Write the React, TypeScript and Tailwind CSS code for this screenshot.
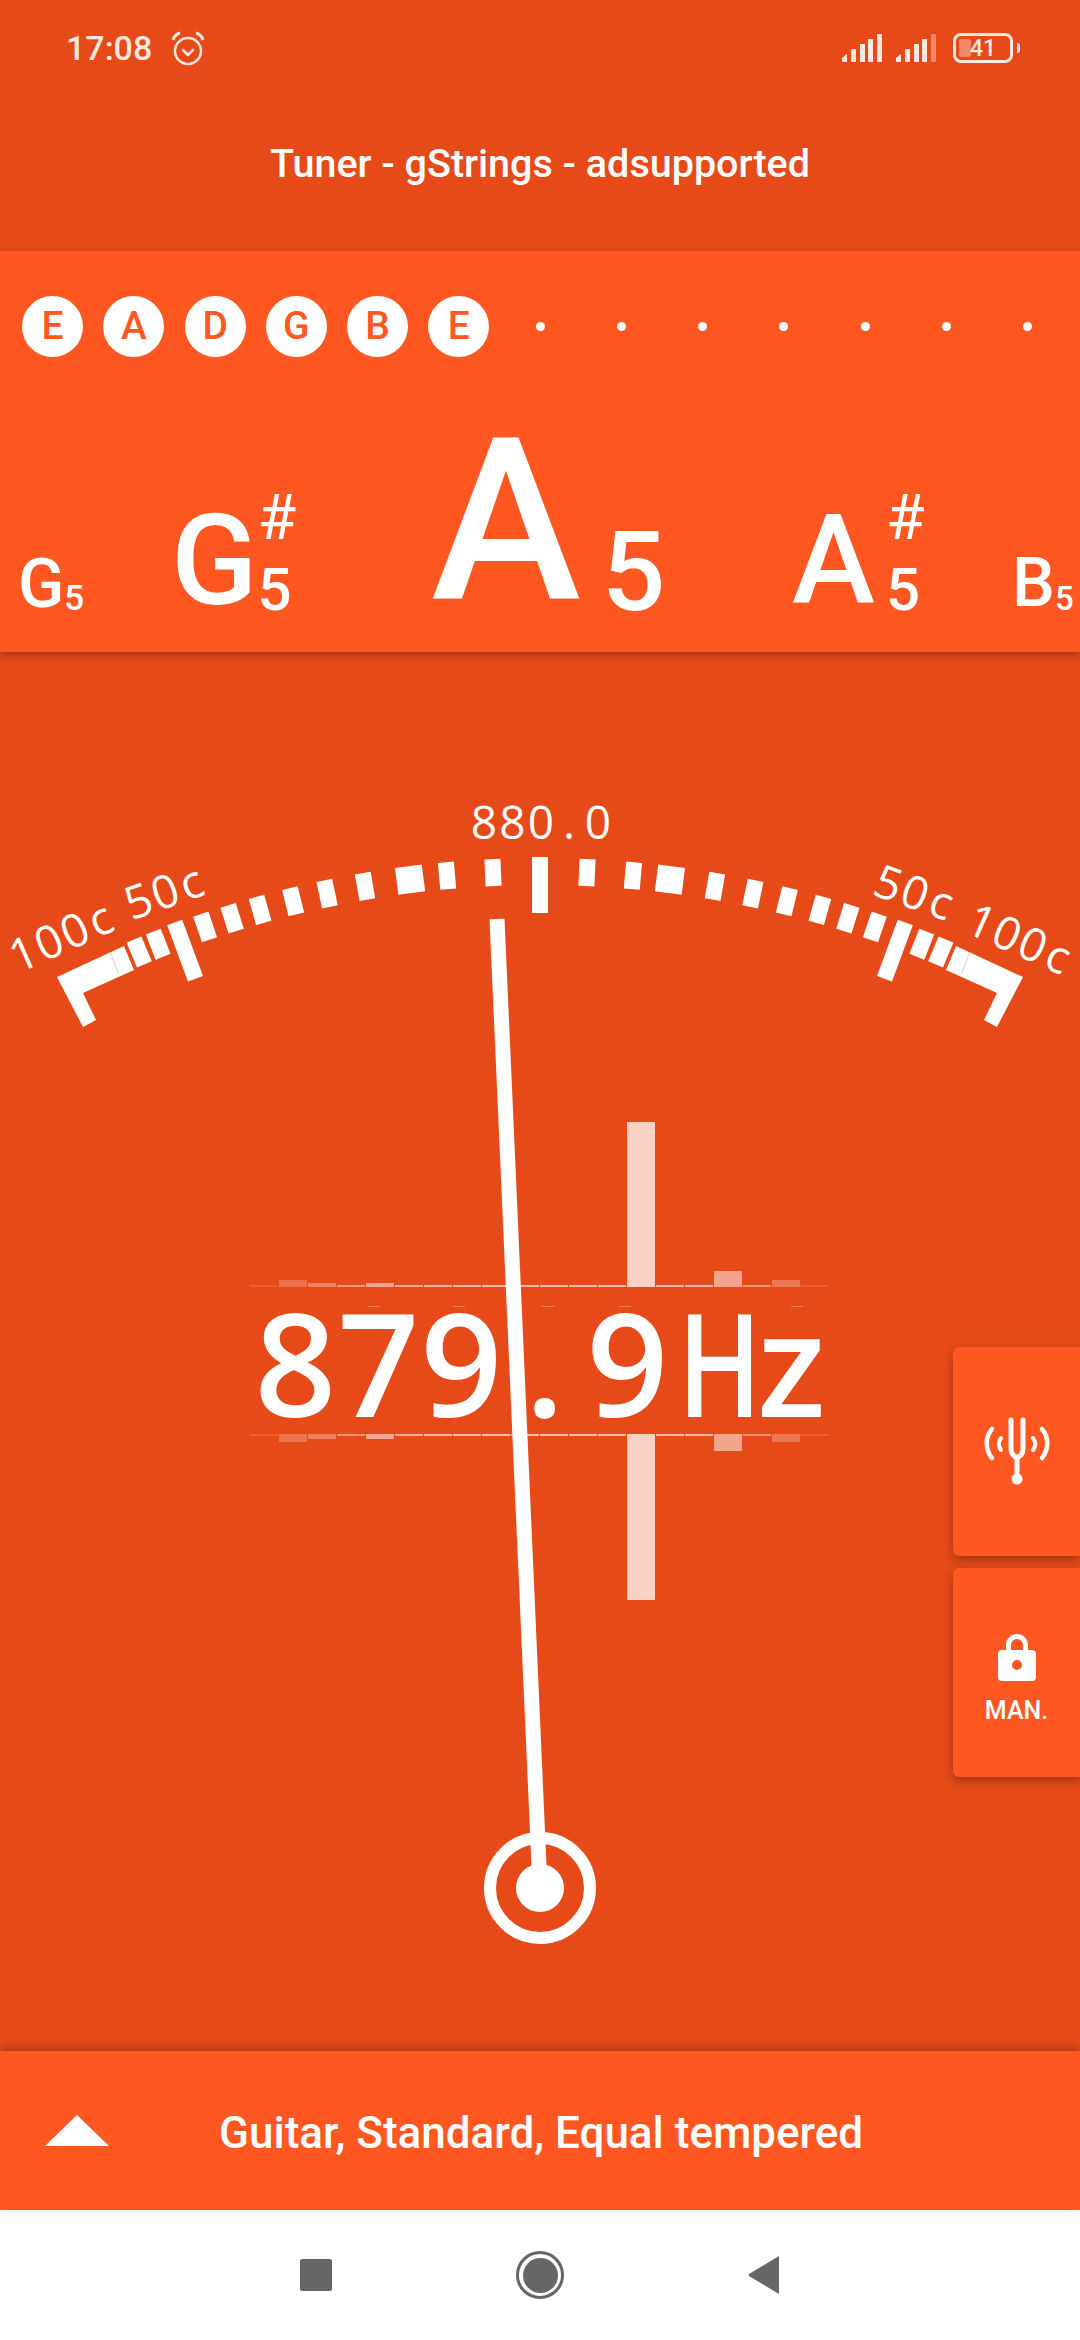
import React from 'react';

const roboto = "font-['Roboto',sans-serif]";
const mono = "font-['Open_Sans',sans-serif]";

const STRINGS = ['E', 'A', 'D', 'G', 'B', 'E', '', '', '', '', '', '', ''];

// gauge pivot, every tick hangs off this circle
const CX = 540;
const CY = 1910;

// horizontal offset from centre, tick width
const TICKS: [number, number][] = [
  [47, 16], [93, 16], [130, 27], [175, 16], [213, 16], [247, 16],
  [280, 16], [308, 16], [335, 16], [382, 16], [401, 16],
];

// spectrum cells: height above the line, opacity
const SPECTRUM: [number, number][] = [
  [2, 0.12], [7, 0.22], [4, 0.3], [2, 0.42], [4, 0.5], [2, 0.55], [2, 0.6], [2, 0.62], [2, 0.65], [2, 0.65],
  [2, 0.65], [2, 0.65], [2, 0.65], [165, 0.75], [2, 0.62], [2, 0.6], [16, 0.5], [2, 0.4], [7, 0.25], [2, 0.12],
];

const deg = (dx: number) => (Math.asin(dx / 1039) * 180) / Math.PI;

const Bracket = ({ flip }: { flip?: boolean }) => (
  <g transform={flip ? 'translate(1080 0) scale(-1 1)' : undefined}>
    <polygon fill="#fff" points="57,977 124,946 134,970 83,993 96,1020 83,1027" />
    <line x1={110} y1={952} x2={119} y2={975} stroke="#f3b9a4" strokeWidth={0.8} />
  </g>
);

const Dial = () => (
  <svg className="absolute left-0 top-0" width={1080} height={1399} viewBox="0 652 1080 1399">
    {/* spectrum, same bars mirrored around the frequency readout */}
    {SPECTRUM.map(([h, o], i) => (
      <g key={i} fill="#fff" opacity={o}>
        <rect x={250 + i * 29} y={1287 - h} width={28} height={h} />
        <rect x={250 + i * 29} y={1434} width={28} height={h < 3 ? 2 : h + 1} />
      </g>
    ))}
    {[368, 453, 542, 619, 791].map((x) => (
      <rect key={x} x={x} y={1306} width={12} height={1} fill="#fff" opacity={0.3} />
    ))}

    {/* scale */}
    <rect x={532} y={857} width={16} height={56} fill="#fff" />
    {TICKS.flatMap(([dx, w]) =>
      [-1, 1].map((side) => (
        <rect
          key={`${dx}${side}`}
          x={CX - w / 2}
          y={CY - 1052}
          width={w}
          height={27}
          fill="#fff"
          transform={`rotate(${side * deg(dx)} ${CX} ${CY})`}
        />
      )),
    )}
    {[-1, 1].map((side) => (
      <rect
        key={side}
        x={CX - 8}
        y={CY - 1053}
        width={16}
        height={60}
        fill="#fff"
        transform={`rotate(${side * 20.3} ${CX} ${CY})`}
      />
    ))}
    <Bracket />
    <Bracket flip />

    <g fill="#fff" fontFamily="'Open Sans', sans-serif" fontWeight={500} fontSize={46} textAnchor="middle">
      <text x="484 512.5 541 569 598" y={839}>880.0</text>
      <text x="-41 -13 15 43" y={16} transform="translate(61 937) rotate(-24)">100c</text>
      <text x="-28 0 28" y={16} transform="translate(165 892) rotate(-19.5)">50c</text>
      <text x="-28 0 28" y={16} transform="translate(915 893) rotate(19.5)">50c</text>
      <text x="-41 -13 15 43" y={16} transform="translate(1019 939) rotate(24)">100c</text>
    </g>

    {/* needle */}
    <line x1={497} y1={919} x2={540} y2={1888} stroke="#fff" strokeWidth={15} />
    <circle cx={540} cy={1888} r={50} fill="none" stroke="#fff" strokeWidth={12} />
    <circle cx={540} cy={1888} r={24} fill="#fff" />
  </svg>
);

const Note = ({ letter, size, sub, raise, sharp, width }: {
  letter: string; size: string; sub: string; raise: string; sharp?: boolean; width: string;
}) => (
  <div className={`${width} shrink-0 whitespace-nowrap leading-none`}>
    <span className={`${size} ${raise} font-medium`}>{letter}</span>
    <span className={`${sub} relative inline-block font-medium leading-none`}>
      5
      {sharp && <span className="absolute left-0 bottom-[71px] text-[63px] font-normal leading-none">#</span>}
    </span>
  </div>
);

const Tuner = () => (
  <svg width={66} height={68} viewBox="0 0 66 68" fill="none" stroke="#fff" strokeLinecap="round">
    <path d="M27 3v29c0 5 3 8 6 8s6-3 6-8V3" strokeWidth={5} />
    <path d="M33 40v20" strokeWidth={5} />
    <circle cx={33} cy={62} r={5.5} fill="#fff" stroke="none" />
    <path d="M8 12C1 20 1 32 8 41" strokeWidth={4.5} />
    <path d="M58 12c7 8 7 20 0 29" strokeWidth={4.5} />
    <path d="M17 21c-3 4-3 8 0 12" strokeWidth={4} />
    <path d="M49 21c3 4 3 8 0 12" strokeWidth={4} />
  </svg>
);

const Lock = () => (
  <svg width={38} height={48} viewBox="0 0 38 48" fill="#fff">
    <path
      fillRule="evenodd"
      d="M8 17v-5a11 11 0 0 1 22 0v5h4a4 4 0 0 1 4 4v23a4 4 0 0 1-4 4H4a4 4 0 0 1-4-4V21a4 4 0 0 1 4-4zm5 0h12v-5a6 6 0 0 0-12 0zm6 20a5 5 0 1 0 0-10 5 5 0 0 0 0 10z"
    />
  </svg>
);

const Signal = ({ dim }: { dim?: boolean }) => (
  <svg width={40} height={28} viewBox="0 0 40 28" fill="#fde8df">
    <path d="M0 28v-4l5-4v8z" />
    <rect x={9} y={15} width={5} height={13} />
    <rect x={18} y={10} width={5} height={18} />
    <rect x={26} y={5} width={5} height={23} />
    <rect x={35} y={0} width={5} height={28} opacity={dim ? 0.4 : 1} />
  </svg>
);

const SideButton = ({ children }: { children: React.ReactNode }) => (
  <div className="flex h-[209px] w-[127px] flex-col items-center rounded-l-md bg-[#ff5722] shadow-[0_4px_10px_rgba(0,0,0,0.3)]">
    {children}
  </div>
);

export default function App() {
  return (
    <div className={`flex h-[2340px] w-[1080px] flex-col overflow-hidden bg-[#e64a19] text-white ${roboto}`}>
      {/* status + app bar */}
      <div className="h-[251px] shrink-0">
        <div className="flex h-[96px] items-start justify-between pl-[66px] pr-[60px] pt-[29px] text-[#fde8df]">
          <div className="flex items-center gap-[19px]">
            <span className="text-[34px] font-medium leading-[38px]">17:08</span>
            <svg width={34} height={35} viewBox="0 0 34 35" fill="none" stroke="#fde8df" strokeWidth={2.5}>
              <circle cx={17} cy={20} r={13} />
              <path d="M12 19l5 5 5-5" strokeLinecap="round" />
              <path d="M2 9c1-3 3-6 7-7M32 9c-1-3-3-6-7-7" strokeWidth={3} />
            </svg>
          </div>
          <div className="flex items-center gap-[14px] pt-[4px]">
            <Signal />
            <Signal dim />
            <div className="flex items-center gap-[4px] pl-[3px]">
              <div className="relative flex h-[30px] w-[60px] items-center justify-center rounded-[8px] border-[3px] border-[#fde8df]">
                <div className="absolute bottom-[3px] left-[3px] top-[3px] w-[12px] rounded-[2px] bg-[#fde8df] opacity-40" />
                <span className="relative text-[23px] font-medium leading-none">41</span>
              </div>
              <div className="h-[10px] w-[3px] rounded-r bg-[#fde8df]" />
            </div>
          </div>
        </div>
        <div className="pt-[45px] text-center text-[39.5px] font-medium leading-[46px]">Tuner - gStrings - adsupported</div>
      </div>

      {/* string selector and note strip */}
      <div className="relative z-10 h-[401px] shrink-0 bg-[#ff5722] shadow-[0_3px_8px_rgba(0,0,0,0.3)]">
        <div className="flex pl-[12px] pt-[45px]">
          {STRINGS.map((s, i) => (
            <div key={i} className="flex h-[61px] w-[81.25px] items-center justify-center">
              {s ? (
                <div className="flex h-[61px] w-[61px] items-center justify-center rounded-full bg-white text-[39px] font-medium text-[#ff5722]">
                  {s}
                </div>
              ) : (
                <div className="h-[9px] w-[9px] rounded-full bg-white" />
              )}
            </div>
          ))}
        </div>
        <div className="mt-[52px] flex items-baseline pl-[18px]">
          <Note letter="G" size="text-[68px]" sub="text-[35px]" raise="align-[3px]" width="w-[153px]" />
          <Note letter="G" size="text-[127px]" sub="text-[60px]" raise="align-[6px]" sharp width="w-[260px]" />
          <Note letter="A" size="text-[226px]" sub="ml-[21px] text-[112px]" raise="align-[11px]" width="w-[361px]" />
          <Note letter="A" size="text-[125px]" sub="ml-[11px] text-[60px]" raise="align-[7px]" sharp width="w-[220px]" />
          <Note letter="B" size="text-[68px]" sub="text-[33px]" raise="align-[4px]" width="w-[60px]" />
        </div>
      </div>

      {/* gauge */}
      <div className="relative flex-1">
        <Dial />
        <div className={`absolute left-[254px] top-[620px] flex text-[143px] font-semibold leading-[180px] ${mono}`}>
          <span className="w-[83px] text-center">8</span>
          <span className="w-[83px] text-center">7</span>
          <span className="w-[83px] text-center">9</span>
          <span className="w-[83px] text-center">.</span>
          <span className="w-[83px] text-center">9</span>
          <span className="w-[79px] scale-x-[0.78] text-center">H</span>
          <span className="w-[87px] text-center">z</span>
        </div>
        <div className="absolute right-0 top-[695px] flex flex-col gap-[12px]">
          <SideButton>
            <div className="pt-[70px]"><Tuner /></div>
          </SideButton>
          <SideButton>
            <div className="pt-[65px]"><Lock /></div>
            <span className="pt-[15px] text-[25px] font-medium leading-[29px]">MAN.</span>
          </SideButton>
        </div>
      </div>

      {/* tuning selector */}
      <div className="relative z-10 flex h-[159px] shrink-0 items-center bg-[#ff5722] pl-[45px] shadow-[0_-3px_8px_rgba(0,0,0,0.25)]">
        <div className="h-0 w-0 border-x-[32px] border-b-[31px] border-x-transparent border-b-white" />
        <span className="pl-[110px] pt-[5px] text-[44px] font-medium leading-[50px]">Guitar, Standard, Equal tempered</span>
      </div>

      {/* nav bar */}
      <div className="flex h-[130px] shrink-0 items-center justify-center bg-white">
        <div className="h-[32px] w-[32px] rounded-[2px] bg-[#666]" />
        <div className="mx-[184px] flex h-[48px] w-[48px] items-center justify-center rounded-full border-[3px] border-[#666]">
          <div className="h-[35px] w-[35px] rounded-full bg-[#666]" />
        </div>
        <svg width={32} height={38} viewBox="0 0 32 38" fill="#666">
          <path d="M31 0v38L1 20v-2z" strokeLinejoin="round" />
        </svg>
      </div>
    </div>
  );
}
